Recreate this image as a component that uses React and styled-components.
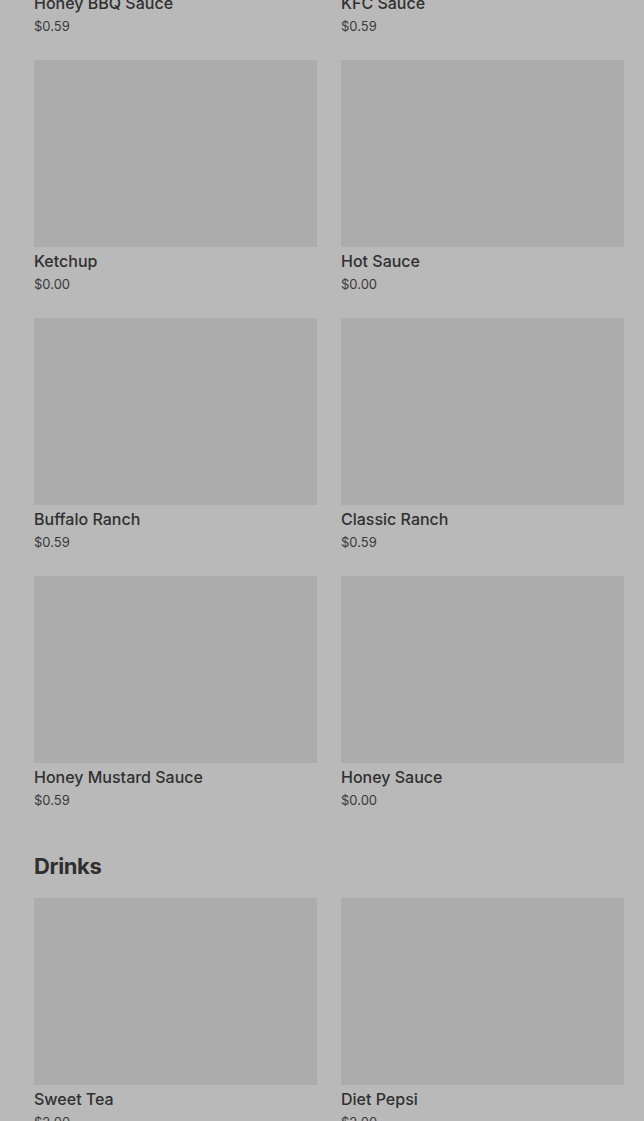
import React from "react"
import styled, { createGlobalStyle } from "styled-components"

const Global = createGlobalStyle`
  body {
    margin: 0;
    background: #b9b9b9;
    font-family: Inter, "Noto Sans", sans-serif;
    overflow: hidden;
  }
`

const Page = styled.main`
  padding: 0 20px 0 34px;
  margin-top: -198px;
  display: flex;
  flex-direction: column;
  gap: 41px;
`

const Section = styled.section`
  display: flex;
  flex-direction: column;
  gap: 16px;
`

const Heading = styled.h2`
  margin: 0;
  font-size: 22px;
  line-height: 32px;
  font-weight: 700;
  letter-spacing: -0.4px;
  color: #2f2f2f;
`

const Grid = styled.div`
  display: grid;
  grid-template-columns: 283px 283px;
  column-gap: 24px;
  row-gap: 25px;
`

const Card = styled.div`
  display: flex;
  flex-direction: column;
`

const Thumb = styled.div`
  height: 187px;
  background: #acacac;
`

const Name = styled.div`
  margin-top: 4px;
  font-size: 16px;
  line-height: 20px;
  font-weight: 500;
  color: #303030;
`

const Price = styled.div`
  margin-top: 4px;
  font-size: 13px;
  line-height: 18px;
  color: #3a3a3a;
`

const sections = [
  {
    title: null,
    items: [
      ["Honey BBQ Sauce", "$0.59"],
      ["KFC Sauce", "$0.59"],
      ["Ketchup", "$0.00"],
      ["Hot Sauce", "$0.00"],
      ["Buffalo Ranch", "$0.59"],
      ["Classic Ranch", "$0.59"],
      ["Honey Mustard Sauce", "$0.59"],
      ["Honey Sauce", "$0.00"],
    ],
  },
  {
    title: "Drinks",
    items: [
      ["Sweet Tea", "$2.00"],
      ["Diet Pepsi", "$2.00"],
    ],
  },
]

export default function App() {
  return (
    <>
      <Global />
      <Page>
        {sections.map((s, i) => (
          <Section key={i}>
            {s.title && <Heading>{s.title}</Heading>}
            <Grid>
              {s.items.map(([name, price]) => (
                <Card key={name}>
                  <Thumb />
                  <Name>{name}</Name>
                  <Price>{price}</Price>
                </Card>
              ))}
            </Grid>
          </Section>
        ))}
      </Page>
    </>
  )
}
